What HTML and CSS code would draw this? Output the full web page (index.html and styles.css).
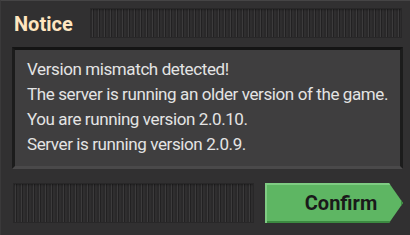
FILE: index.html
```html
<!DOCTYPE html>
<html>
<head>
<meta charset="utf-8">
<link rel="stylesheet" href="styles.css">
</head>
<body>
<div class="frame">
  <div class="titlebar">
    <h1 class="title">Notice</h1>
    <div class="dragger"></div>
  </div>
  <div class="panel">
    <p class="line">Version mismatch detected!</p>
    <p class="line">The server is running an older version of the game.</p>
    <p class="line">You are running version 2.0.10.</p>
    <p class="line">Server is running version 2.0.9.</p>
  </div>
  <div class="footer">
    <div class="dragger footer-dragger"></div>
    <button class="confirm">Confirm</button>
  </div>
</div>
</body>
</html>
```

FILE: styles.css
```css
html, body {
  margin: 0;
  padding: 0;
  background: #313031;
  width: 410px;
  height: 235px;
  overflow: hidden;
}

.frame {
  box-sizing: border-box;
  width: 410px;
  height: 235px;
  border-top: 1px solid #454445;
  border-left: 1px solid #3a393a;
  padding: 7px 8px 0 11px;
  font-family: "Roboto", "Noto Sans", sans-serif;
}

.titlebar {
  display: flex;
  align-items: center;
  height: 30px;
}

.title {
  margin: 1px 0 0 2px;
  font-size: 20px;
  font-weight: bold;
  color: #ffe6c0;
  line-height: 30px;
  width: 76px;
}

.dragger {
  flex: 1;
  align-self: stretch;
  background:
    repeating-linear-gradient(90deg,
      #2a292a 0px, #2a292a 2px,
      #3c3b3c 2px, #3c3b3c 3px,
      #222122 3px, #222122 4px,
      #2f2e2f 4px, #2f2e2f 6px);
  box-shadow: inset 0 0 0 1px #282728, inset 0 2px 2px rgba(0,0,0,0.3);
}

.panel {
  margin-top: 9px;
  height: 122px;
  box-sizing: border-box;
  background: #3f3e3f;
  border-top: 3px solid #141414;
  border-left: 3px solid #1c1c1c;
  border-right: 3px solid #1c1c1c;
  border-bottom: 3px solid #4a494a;
  padding: 7px 0 0 12px;
  margin-right: -1px;
}

.line {
  margin: 0;
  font-size: 17px;
  letter-spacing: -0.4px;
  white-space: nowrap;
  line-height: 25px;
  color: #e4e4e4;
}

.footer {
  display: flex;
  margin-top: 14px;
  height: 40px;
  gap: 11px;
}

.footer-dragger {
  margin-left: 1px;
}

.confirm {
  width: 138px;
  height: 40px;
  border: none;
  padding: 0 0 0 14px;
  margin-right: -1px;
  font-family: inherit;
  font-size: 20px;
  font-weight: bold;
  color: #1a1a1a;
  text-align: center;
  background: #5eb663;
  clip-path: polygon(0 0, 124px 0, 138px 50%, 124px 100%, 0 100%);
  box-shadow: inset 2px 2px 0 #7fcc83, inset -2px -2px 0 #3c8a41;
}
```
